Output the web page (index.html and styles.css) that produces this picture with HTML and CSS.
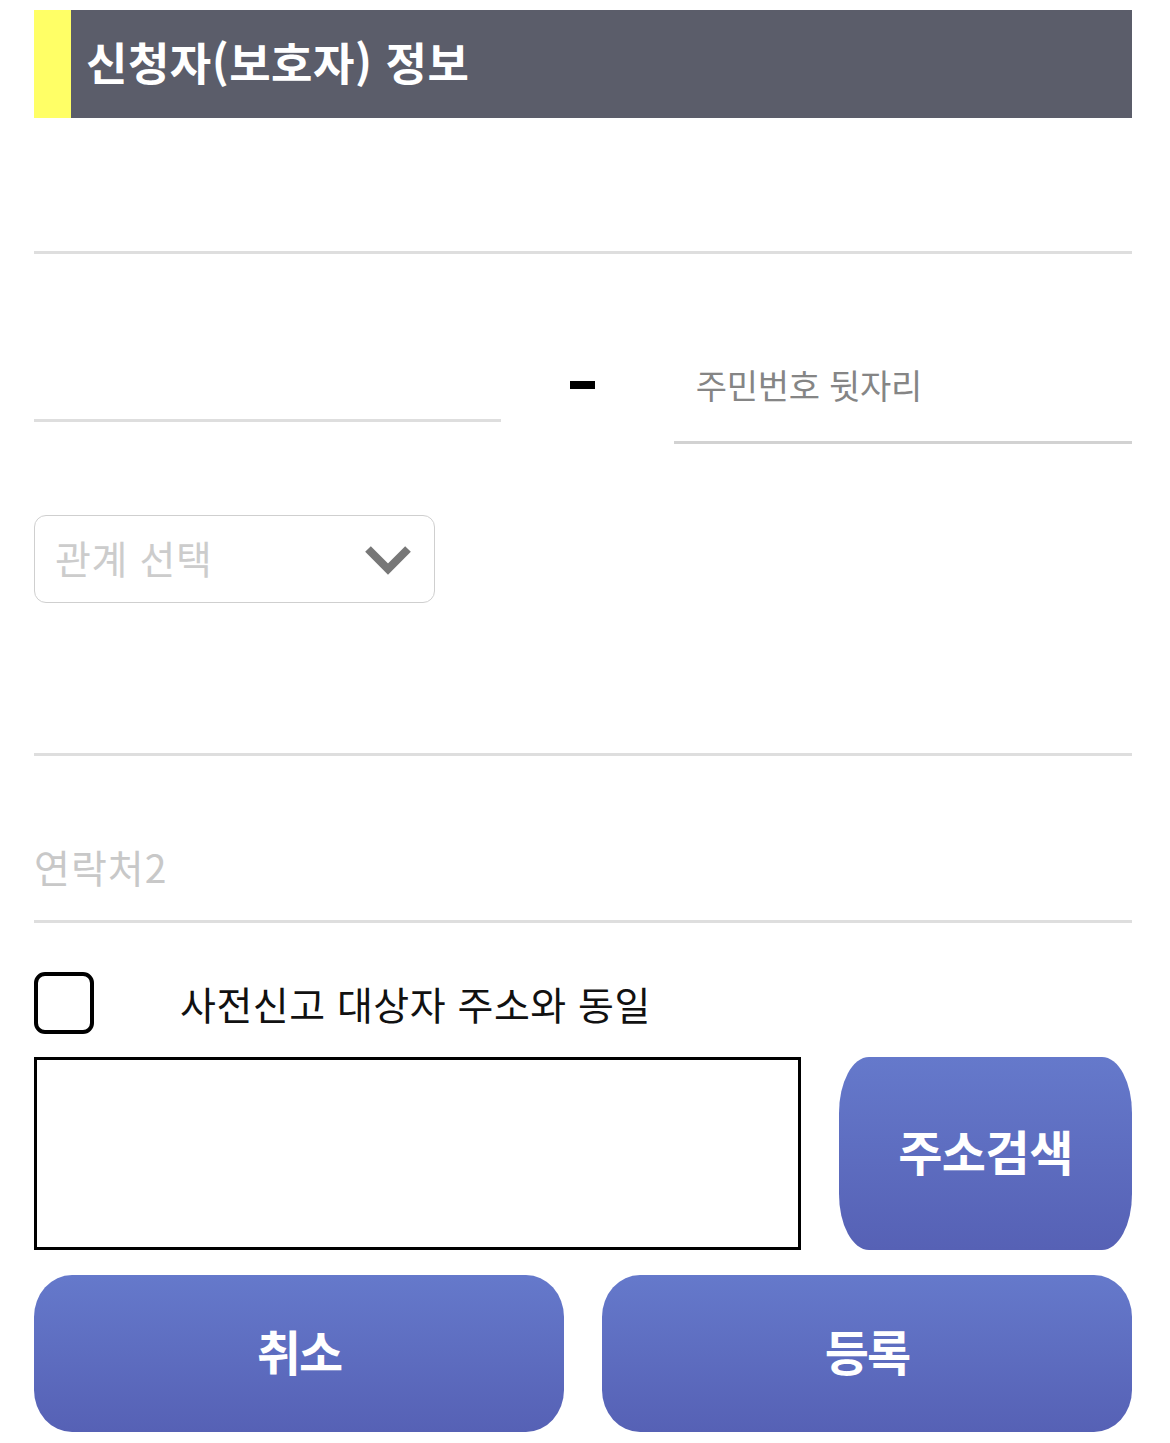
FILE: index.html
```html
<!DOCTYPE html>
<html lang="ko">
<head>
<meta charset="utf-8">
<link rel="stylesheet" href="styles.css">
</head>
<body>
<div class="page">
  <div class="section-head"><span class="section-title">신청자(보호자) 정보</span></div>

  <div class="field field-name"></div>

  <div class="jumin-row">
    <div class="jumin-front"></div>
    <div class="jumin-dash"><span class="dash-bar"></span></div>
    <div class="jumin-back"><span class="ph ph-jumin">주민번호 뒷자리</span></div>
  </div>

  <div class="select-box">
    <span class="ph ph-select">관계 선택</span>
    <svg class="chev" width="48" height="32" viewBox="0 0 48 32"><polyline points="4,5 24,25 44,5" fill="none" stroke="#777" stroke-width="8"/></svg>
  </div>

  <div class="field field-phone1"></div>

  <div class="field field-phone2"><span class="ph ph-phone">연락처2</span></div>

  <label class="check-row">
    <span class="check-box"></span>
    <span class="check-text">사전신고 대상자 주소와 동일</span>
  </label>

  <div class="addr-row">
    <div class="addr-box"></div>
    <button class="btn btn-search">주소검색</button>
  </div>

  <div class="action-row">
    <button class="btn btn-action">취소</button>
    <button class="btn btn-action">등록</button>
  </div>
</div>
</body>
</html>
```
FILE: styles.css
```css
* { box-sizing: border-box; }
html, body { margin: 0; padding: 0; background: #fff; }
body { font-family: "Noto Sans CJK KR", "Noto Sans", sans-serif; }

.page {
  width: 1170px;
  padding: 10px 38px 0 34px;
}

.section-head {
  height: 108px;
  background: #5b5d6a;
  border-left: 37px solid #ffff66;
  display: flex;
  align-items: center;
  padding-left: 15px;
}
.section-title {
  color: #fff;
  font-size: 45px;
  font-weight: 700;
  letter-spacing: 0.5px;
  line-height: 1;
  margin-top: -6px;
}

.field {
  border-bottom: 3px solid #dedede;
  display: flex;
  align-items: flex-end;
}
.field-name { height: 136px; }
.field-phone1 { height: 153px; }
.field-phone2 { height: 167px; padding-bottom: 34px; }

.ph { line-height: 1; }

.jumin-row {
  display: flex;
  align-items: flex-start;
  height: 190px;
}
.jumin-front {
  width: 468px;
  height: 168px;
  border-bottom: 3px solid #dedede;
}
.jumin-dash {
  width: 173px;
  height: 168px;
  display: flex;
  justify-content: center;
  padding-top: 127px;
}
.dash-bar {
  display: block;
  width: 25px;
  height: 8px;
  background: #000;
  margin-left: -10px;
}
.jumin-back {
  width: 459px;
  height: 190px;
  border-bottom: 3px solid #d2d2d2;
  padding: 114px 0 0 22px;
}
.ph-jumin {
  color: #858585;
  font-size: 34px;
  letter-spacing: -0.3px;
}

.select-box {
  margin-top: 71px;
  width: 401px;
  height: 88px;
  border: 1px solid #cfcfcf;
  border-radius: 12px;
  display: flex;
  align-items: center;
  justify-content: space-between;
  padding: 0 22px 0 20px;
}
.ph-select {
  color: #cccccc;
  font-size: 39px;
  letter-spacing: 0.6px;
  margin-top: -4px;
}
.chev { display: block; margin-top: 2px; }

.ph-phone {
  color: #c8c8c8;
  font-size: 39px;
  letter-spacing: 1px;
}

.check-row {
  display: flex;
  align-items: center;
  margin-top: 49px;
  height: 62px;
}
.check-box {
  width: 60px;
  height: 62px;
  border: 4px solid #000;
  border-radius: 11px;
  flex: none;
}
.check-text {
  margin-left: 86px;
  font-size: 39px;
  color: #111;
  letter-spacing: 0.5px;
  line-height: 1;
}

.addr-row {
  display: flex;
  justify-content: space-between;
  margin-top: 23px;
  height: 193px;
}
.addr-box {
  width: 767px;
  height: 193px;
  border: 3px solid #000;
}

.btn {
  border: none;
  color: #fff;
  font-family: "Noto Sans CJK KR", "Noto Sans", sans-serif;
  font-weight: 700;
  background: linear-gradient(to bottom, #6579cb, #5661b5);
  padding: 0 0 7px 0;
  cursor: pointer;
}
.btn-search {
  width: 293px;
  height: 193px;
  border-radius: 30px / 56px;
  font-size: 48px;
  letter-spacing: -0.5px;
}

.action-row {
  display: flex;
  justify-content: space-between;
  margin-top: 25px;
}
.btn-action {
  width: 530px;
  height: 157px;
  border-radius: 38px / 42px;
  font-size: 48px;
  letter-spacing: -2px;
}
```
